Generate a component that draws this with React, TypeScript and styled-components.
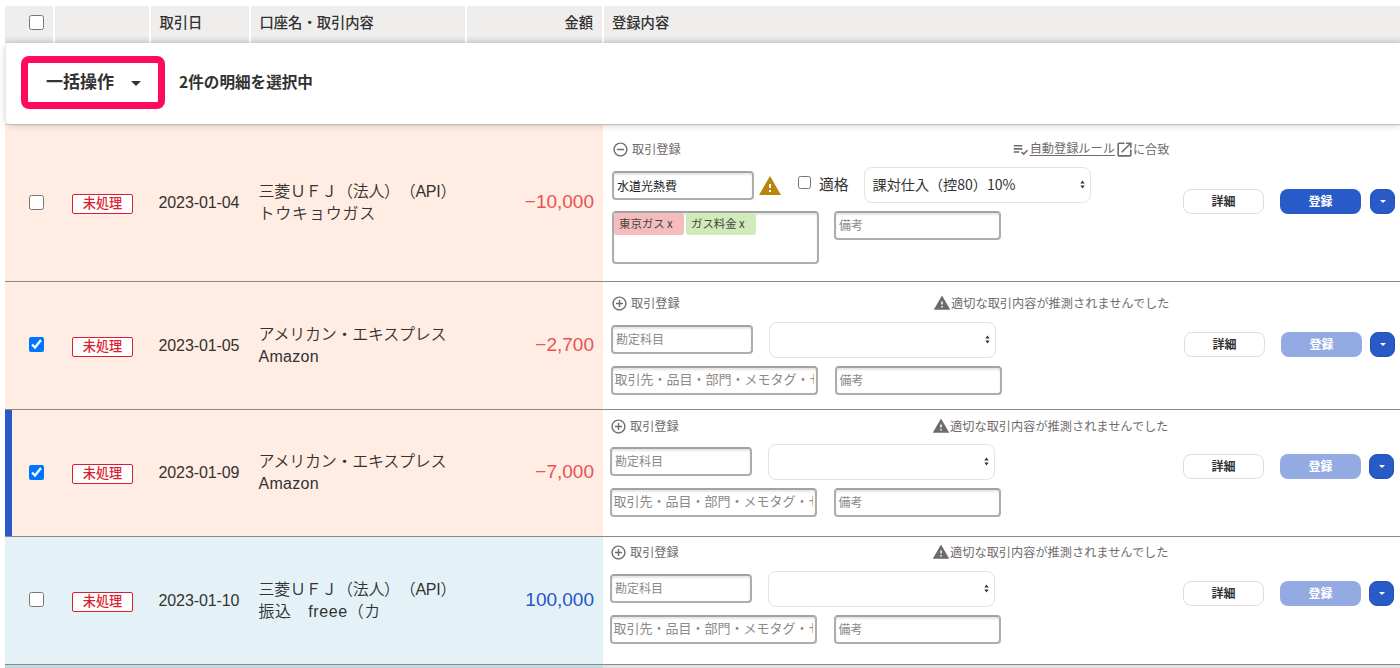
import React from "react";
import styled, { createGlobalStyle } from "styled-components";
import { MdAddCircleOutline, MdOpenInNew, MdRemoveCircleOutline, MdWarning } from "react-icons/md";

const GlobalStyle = createGlobalStyle`
  * { box-sizing: border-box; }
  html, body { margin: 0; background: #fff; overflow: hidden; }
  body {
    font-family: "Liberation Sans", "Noto Sans CJK JP", sans-serif;
    color: #323232;
    white-space: nowrap;
  }
`;

const Page = styled.main`
  height: 668px;
  padding: 6px 0 0 5px;
  overflow: hidden;
`;

const HeaderRow = styled.div`
  display: grid;
  grid-template-columns: 50px 96px 100px 216px 137px 1fr;
  height: 37px;
`;

const HeaderCell = styled.div<{ $end?: boolean }>`
  display: flex;
  align-items: center;
  justify-content: ${(p) => (p.$end ? "flex-end" : "flex-start")};
  padding: 0 9px 5px 8.5px;
  border-right: 2px solid #fff;
  background: linear-gradient(#efeeed 80%, #dfdedd);
  font: 500 14.3px/20px "Noto Sans CJK JP", sans-serif;
  &:last-child { border-right: 0; padding-left: 8px; }
`;

const CheckBox = styled.input<{ $size?: number }>`
  width: ${(p) => p.$size ?? 15}px;
  height: ${(p) => p.$size ?? 15}px;
  margin: 0;
  flex: none;
`;

const HeaderCheck = styled(CheckBox)`
  margin-left: 15.5px;
`;

const BulkBar = styled.div`
  position: relative;
  display: flex;
  align-items: center;
  height: 81px;
  margin-left: 1px;
  padding-left: 15px;
  background: #fff;
  border-radius: 5px 0 0 5px;
  box-shadow: 0 1px 7px rgba(0, 0, 0, 0.22);
`;

const BulkButton = styled.button`
  display: flex;
  align-items: center;
  width: 144px;
  height: 53px;
  padding: 0 0 3px 18px;
  margin-bottom: 3px;
  border: 7px solid #ff0b5c;
  border-radius: 8px;
  background: #fff;
  color: #323232;
  font: 700 17px/24px "Noto Sans CJK JP", sans-serif;
`;

const Caret = styled.span<{ $size: number }>`
  border: ${(p) => p.$size}px solid transparent;
  border-top-color: currentColor;
  border-bottom: 0;
`;

const BulkCaret = styled(Caret)`
  margin: 6px 0 0 16.5px;
`;

const SelectedCount = styled.strong`
  margin: 0 0 5px 14px;
  font: 700 15.6px/24px "Noto Sans CJK JP", sans-serif;
`;

const Row = styled.section<{ $height: number }>`
  display: grid;
  grid-template-columns: 598px 1fr;
  height: ${(p) => p.$height}px;
  border-bottom: 1px solid #8c8989;
`;

const FirstGap = styled.div`
  height: 1px;
  background: #d8d8d8;
`;

const Entry = styled.div<{ $income?: boolean; $active?: boolean }>`
  display: grid;
  grid-template-columns: 50px 96px 100px 216px 136px;
  align-items: center;
  background: ${(p) => (p.$income ? "#e4f2f8" : "#ffece3")};
  box-shadow: ${(p) => (p.$active ? "inset 7px 0 #285ac8" : "none")};
`;

const RowCheck = styled(CheckBox)`
  margin: 0 0 2px 24px;
`;

const Status = styled.span`
  display: block;
  width: 61px;
  height: 20px;
  margin: 2px 0 0 17px;
  border: 1px solid #dc1e32;
  border-radius: 2px;
  background: #fff;
  color: #dc1e32;
  font: 500 13.2px/16px "Noto Sans CJK JP", sans-serif;
  text-align: center;
`;

const DateText = styled.time`
  padding-left: 7.5px;
  font-size: 16px;
  line-height: 20px;
  letter-spacing: -0.1px;
`;

const Description = styled.div`
  padding-left: 7.5px;
  font-size: 16px;
  font-weight: 350;
  line-height: 22px;
  text-spacing-trim: space-all;
`;

const DescriptionLine = styled.div<{ $tracking?: number }>`
  height: 22px;
  letter-spacing: ${(p) => p.$tracking ?? 0}px;
`;

const Amount = styled.div<{ $income?: boolean }>`
  padding: 0 9px 2px 0;
  text-align: right;
  font-size: 19px;
  line-height: 24px;
  color: ${(p) => (p.$income ? "#2855c8" : "#eb5055")};
`;

const Registration = styled.div<{ $left: number }>`
  display: flex;
  align-items: flex-start;
  padding-left: ${(p) => p.$left}px;
  background: #fff;
  font-family: "Noto Sans CJK JP", sans-serif;
`;

const Form = styled.div<{ $top: number; $width: number }>`
  width: ${(p) => p.$width}px;
  flex: none;
  padding-top: ${(p) => p.$top}px;
`;

const FormHead = styled.div<{ $gap: number }>`
  display: flex;
  align-items: center;
  height: 20px;
  margin-bottom: ${(p) => p.$gap}px;
  font-size: 12.2px;
  line-height: 20px;
  color: #6e6b6b;
`;

const HeadLabel = styled.span`
  margin: 0 auto 0 3px;
`;

const HeadNote = styled.span`
  display: flex;
  align-items: center;
  margin-right: -0.5px;
`;

const NoteText = styled.span`
  margin-bottom: 1px;
`;

const RuleLink = styled.a`
  margin-bottom: 2px;
  text-decoration: underline;
  text-underline-offset: 2px;
`;

const OpenIcon = styled(MdOpenInNew)`
  margin: 1px -1px 0 0;
`;

const FormLine = styled.div`
  display: flex;
  align-items: flex-start;
  height: 36px;
  margin-bottom: 8px;
`;

const Field = styled.div<{ $width: number; $height?: number; $size?: number; $filled?: boolean }>`
  display: flex;
  align-items: flex-start;
  flex: none;
  width: ${(p) => p.$width}px;
  height: ${(p) => p.$height ?? 29}px;
  padding-left: ${(p) => (p.$size === 13 ? 1.5 : 3)}px;
  overflow: hidden;
  border: 2px solid #adadad;
  border-top-color: #a2a2a2;
  border-radius: 4px;
  background: #fff;
  box-shadow: inset 0 2px 2px rgba(0, 0, 0, 0.1);
  font-size: ${(p) => p.$size ?? 12}px;
  line-height: ${(p) => (p.$filled ? 26 : 24)}px;
  color: ${(p) => (p.$filled ? "#222" : "#8c8989")};
`;

const AccountField = styled(Field)`
  margin-top: ${(p) => (p.$filled ? 3.5 : 3)}px;
`;

const FieldHint = styled.span`
  width: 199px;
  margin-top: -1px;
  overflow: hidden;
`;

const TagField = styled(Field)`
  padding-left: 0;
  gap: 2px;
`;

const Tag = styled.span<{ $color: string }>`
  width: 70px;
  height: 22px;
  padding-left: 5px;
  border-radius: 3px;
  background: ${(p) => p.$color};
  color: #444;
  font-size: 11.4px;
  line-height: 20px;
`;

const WarnIcon = styled(MdWarning)`
  margin: 7px 0 0 4px;
  flex: none;
`;

const Eligible = styled.label`
  display: flex;
  align-items: center;
  gap: 8px;
  height: 36px;
  margin: -1px 15px 0 16px;
  font-size: 14.8px;
  line-height: 20px;
`;

const SmallCheck = styled(CheckBox)`
  margin-bottom: 4px;
`;

const SelectBox = styled.div<{ $indent?: number }>`
  display: flex;
  align-items: center;
  justify-content: space-between;
  width: 227px;
  height: 36px;
  flex: none;
  margin-left: ${(p) => p.$indent ?? 0}px;
  padding: 0 5px 1px 8px;
  border: 1px solid #e4e2e2;
  border-radius: 8px;
  font-size: 14.1px;
  line-height: 20px;
  text-spacing-trim: space-all;
`;

const SelectText = styled.span`
  margin-bottom: 1px;
`;

const BottomLine = styled.div<{ $width: number }>`
  display: flex;
  align-items: flex-start;
  justify-content: space-between;
  width: ${(p) => p.$width}px;
`;

const Actions = styled.div<{ $top: number; $left: number }>`
  display: flex;
  margin: ${(p) => p.$top}px 0 0 ${(p) => p.$left}px;
`;

const Button = styled.button<{ $kind: "plain" | "primary" | "faded" }>`
  width: 81px;
  height: 25px;
  padding: 0 0 2px;
  margin-right: ${(p) => ({ plain: 16, primary: 9, faded: 8 })[p.$kind]}px;
  border: ${(p) => (p.$kind === "plain" ? "1px solid #dfdddd" : "0")};
  border-radius: 8px;
  background: ${(p) => ({ plain: "#fff", primary: "#285ac8", faded: "#93aae3" })[p.$kind]};
  color: ${(p) => (p.$kind === "plain" ? "#323232" : "#fff")};
  font: 700 12px/20px "Noto Sans CJK JP", sans-serif;
`;

const MoreButton = styled.button`
  display: flex;
  align-items: center;
  justify-content: center;
  width: 25px;
  height: 25px;
  padding: 0;
  border: 1px solid #2450b8;
  border-radius: 8px;
  background: #285ac8;
  color: #fff;
`;

const FootShade = styled.div`
  height: 3px;
  background: linear-gradient(90deg, #c5d9e3 598px, #e2e2e2 598px);
`;

const RuleIcon = () => (
  <svg width="17" height="14" viewBox="0 0 17 14" fill="none" stroke="#6e6b6b" strokeWidth="1.6">
    <path d="M0.7 3.8h8.6M0.7 6.9h8.6M0.7 10h5.6M8.6 10l2.1 2.1 3.8-3.8" />
  </svg>
);

const SelectArrows = () => (
  <svg width="5" height="9" viewBox="0 0 5 9" fill="#323232">
    <path d="M2.5 0.4L4.7 3.6H0.3zM2.5 8.6L4.7 5.4H0.3z" />
  </svg>
);

interface Item {
  date: string;
  lines: [string, string];
  tracking: [number, number];
  amount: string;
  income?: boolean;
  checked?: boolean;
  active?: boolean;
  matched?: boolean;
  height: number;
  left: number;
  top: number;
  headGap: number;
  actionsTop: number;
}

const items: Item[] = [
  { date: "2023-01-04", lines: ["三菱ＵＦＪ（法人）（API）", "トウキョウガス"], tracking: [-0.3, 0.8], amount: "−10,000", matched: true, height: 157, left: 9, top: 14, headGap: 8, actionsTop: 64 },
  { date: "2023-01-05", lines: ["アメリカン・エキスプレス", "Amazon"], tracking: [-0.25, 0.3], amount: "−2,700", checked: true, height: 128, left: 8, top: 11, headGap: 9, actionsTop: 50 },
  { date: "2023-01-09", lines: ["アメリカン・エキスプレス", "Amazon"], tracking: [-0.25, 0.3], amount: "−7,000", checked: true, active: true, height: 127, left: 7, top: 6, headGap: 8, actionsTop: 44 },
  { date: "2023-01-10", lines: ["三菱ＵＦＪ（法人）（API）", "振込　freee（カ"], tracking: [-0.3, 0.6], amount: "100,000", income: true, height: 128, left: 7, top: 5, headGap: 9, actionsTop: 44 },
];

const Transaction = ({ item }: { item: Item }) => (
  <Row $height={item.height}>
    <Entry $income={item.income} $active={item.active}>
      <RowCheck type="checkbox" defaultChecked={item.checked} />
      <Status>未処理</Status>
      <DateText>{item.date}</DateText>
      <Description>
        {item.lines.map((line, i) => (
          <DescriptionLine key={line} $tracking={item.tracking[i]}>{line}</DescriptionLine>
        ))}
      </Description>
      <Amount $income={item.income}>{item.amount}</Amount>
    </Entry>
    <Registration $left={item.left}>
      <Form $top={item.top} $width={item.matched ? 557 : 558}>
        <FormHead $gap={item.headGap}>
          {item.matched ? <MdRemoveCircleOutline size={17} /> : <MdAddCircleOutline size={17} />}
          <HeadLabel>取引登録</HeadLabel>
          {item.matched ? (
            <HeadNote>
              <RuleIcon />
              <RuleLink>自動登録ルール</RuleLink>
              <OpenIcon size={19} />
              <NoteText>に合致</NoteText>
            </HeadNote>
          ) : (
            <HeadNote>
              <MdWarning size={18} />
              <NoteText>適切な取引内容が推測されませんでした</NoteText>
            </HeadNote>
          )}
        </FormHead>
        <FormLine>
          <AccountField $width={142} $filled={item.matched}>
            {item.matched ? "水道光熱費" : "勘定科目"}
          </AccountField>
          {item.matched && (
            <>
              <WarnIcon size={24} color="#b8860b" />
              <Eligible>
                <SmallCheck type="checkbox" $size={13} />
                適格
              </Eligible>
            </>
          )}
          <SelectBox $indent={item.matched ? 0 : 16}>
            <SelectText>{item.matched ? "課対仕入（控80）10%" : ""}</SelectText>
            <SelectArrows />
          </SelectBox>
        </FormLine>
        <BottomLine $width={item.matched ? 389 : 390.5}>
          {item.matched ? (
            <TagField $width={207} $height={53}>
              <Tag $color="#f5bcbe">東京ガス x</Tag>
              <Tag $color="#d1ebb8">ガス料金 x</Tag>
            </TagField>
          ) : (
            <Field $width={207} $size={13}>
              <FieldHint>取引先・品目・部門・メモタグ・セ</FieldHint>
            </Field>
          )}
          <Field $width={167}>備考</Field>
        </BottomLine>
      </Form>
      <Actions $top={item.actionsTop} $left={item.matched ? 14 : 15}>
        <Button $kind="plain">詳細</Button>
        <Button $kind={item.matched ? "primary" : "faded"}>登録</Button>
        <MoreButton aria-label="その他">
          <Caret $size={3.5} />
        </MoreButton>
      </Actions>
    </Registration>
  </Row>
);

export default function App() {
  return (
    <Page>
      <GlobalStyle />
      <HeaderRow>
        <HeaderCell><HeaderCheck type="checkbox" /></HeaderCell>
        <HeaderCell />
        <HeaderCell>取引日</HeaderCell>
        <HeaderCell>口座名・取引内容</HeaderCell>
        <HeaderCell $end>金額</HeaderCell>
        <HeaderCell>登録内容</HeaderCell>
      </HeaderRow>
      <BulkBar>
        <BulkButton>
          一括操作
          <BulkCaret $size={5} />
        </BulkButton>
        <SelectedCount>2件の明細を選択中</SelectedCount>
      </BulkBar>
      <FirstGap />
      {items.map((item) => (
        <Transaction key={item.date} item={item} />
      ))}
      <FootShade />
    </Page>
  );
}
